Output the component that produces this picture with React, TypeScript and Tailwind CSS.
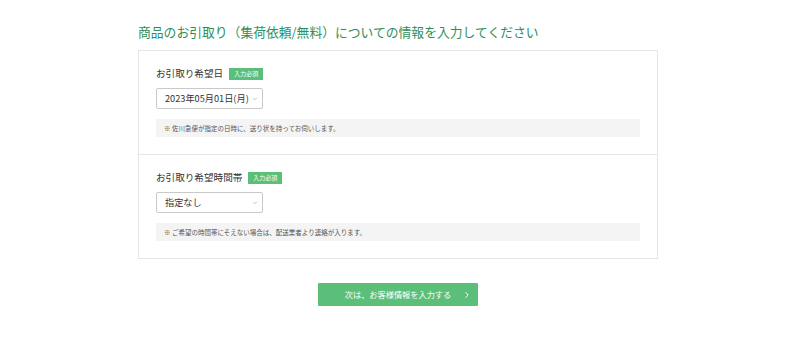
import { ChevronDown, ChevronRight } from "lucide-react";

const font = { fontFamily: '"Noto Sans CJK JP", "Noto Sans", sans-serif' };

type FieldProps = {
  label: string;
  value: string;
  note: string;
  last?: boolean;
};

const Field = ({ label, value, note, last }: FieldProps) => (
  <div
    className={
      "px-[17px] pt-[17px] pb-[17px] " +
      (last ? "" : "border-b border-[#e6e6e6]")
    }
  >
    <div className="flex items-center gap-[6px] h-[12px]">
      <span className="text-[9.6px] leading-none text-[#333]">{label}</span>
      <span className="bg-[#5bbf7a] text-white text-[6px] leading-none px-[5px] h-[12px] flex items-center">
        入力必須
      </span>
    </div>
    <div className="mt-[8px] w-[107px] h-[21px] border border-[#c9c9c9] rounded-[2px] bg-white flex items-center justify-between pl-[8px] pr-[4px]">
      <span className="text-[9.2px] leading-none text-[#333]">{value}</span>
      <ChevronDown className="w-[6px] h-[6px] text-[#888]" strokeWidth={2} />
    </div>
    <div className="mt-[10px] h-[18px] bg-[#f4f4f4] flex items-center px-[8px]">
      <span className="text-[6.5px] leading-none text-[#555]">{note}</span>
    </div>
  </div>
);

export default function App() {
  return (
    <div className="w-[796px] h-[342px] bg-white" style={font}>
      <div className="w-[520px] mx-auto pt-[24px]">
        <h1 className="text-[12.8px] leading-[16px] text-[#2e8f5c] font-normal">
          商品のお引取り（集荷依頼/無料）についての情報を入力してください
        </h1>
        <div className="mt-[10px] border border-[#e6e6e6]">
          <Field
            label="お引取り希望日"
            value="2023年05月01日(月)"
            note="※ 佐川急便が指定の日時に、送り状を持ってお伺いします。"
          />
          <Field
            label="お引取り希望時間帯"
            value="指定なし"
            note="※ ご希望の時間帯にそえない場合は、配送業者より連絡が入ります。"
            last
          />
        </div>
        <div className="mt-[24px] flex justify-center">
          <button className="relative w-[160px] h-[23px] bg-[#5bbf7a] text-white flex items-center justify-center rounded-[1px]">
            <span className="text-[8.2px] leading-none">次は、お客様情報を入力する</span>
            <ChevronRight
              className="absolute right-[6px] top-1/2 -translate-y-1/2 w-[10px] h-[10px]"
              strokeWidth={2.4}
            />
          </button>
        </div>
      </div>
    </div>
  );
}
